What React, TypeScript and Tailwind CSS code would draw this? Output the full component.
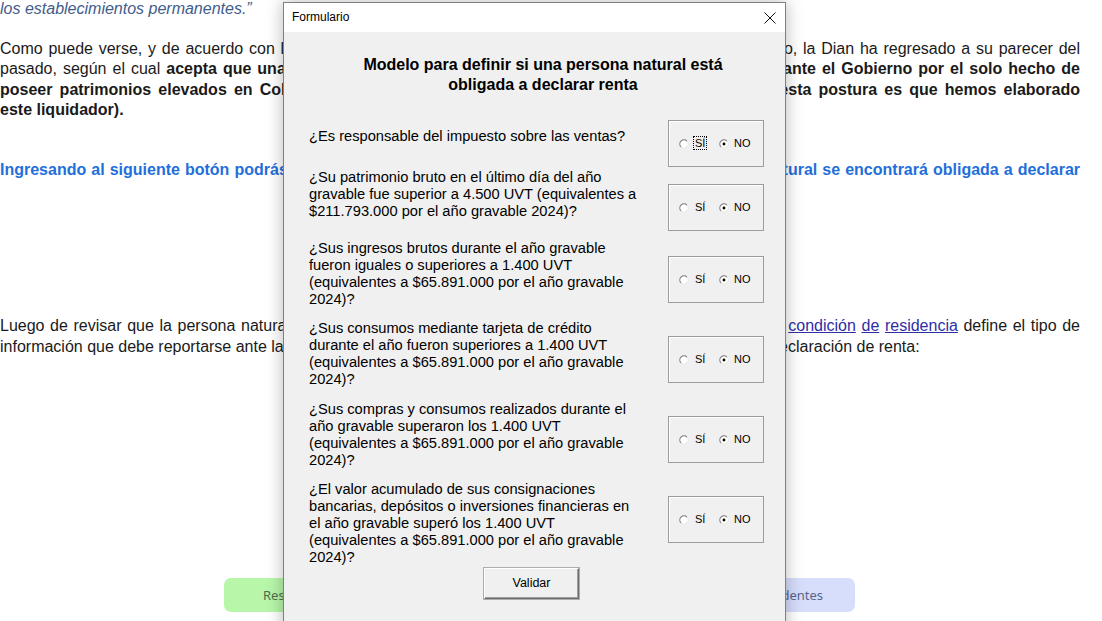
import React from "react";

function JL({ children }: { children: React.ReactNode }) {
  return <span className="block text-justify [text-align-last:justify]">{children}</span>;
}

function Radio({ on }: { on?: boolean }) {
  return (
    <svg width="10" height="10" viewBox="0 0 12 12" className="shrink-0">
      <circle cx="6" cy="6" r="5" fill="#ffffff" />
      <path d="M9.54 2.46 A5 5 0 0 0 2.46 9.54" stroke="#7c7c7c" strokeWidth="1.3" fill="none" />
      <path d="M2.46 9.54 A5 5 0 0 0 9.54 2.46" stroke="#e6e6e6" strokeWidth="1.3" fill="none" />
      {on && <circle cx="6" cy="6" r="1.7" fill="#000000" />}
    </svg>
  );
}

function Box({ focus, mt }: { focus?: boolean; mt: string }) {
  return (
    <div className={`${mt} flex h-[47px] w-[96px] shrink-0 items-center border border-[#9c9c9c] pl-[10px] shadow-[inset_1px_1px_0_#ffffff] font-['Liberation_Sans',Arial,sans-serif] text-[11px] text-black`}>
      <Radio />
      <span className="ml-[4px] w-[26px]">
        <span className={focus ? "border border-dotted border-black px-[1px]" : "px-[2px]"}>SÍ</span>
      </span>
      <Radio on />
      <span className="ml-[5px]">NO</span>
    </div>
  );
}

const rows = [
  { rowMt: "mt-[25px]", textMt: "mt-[8px]", boxMt: "mt-0", focus: true, lines: ["¿Es responsable del impuesto sobre las ventas?"] },
  { rowMt: "mt-[2px]", textMt: "mt-0", boxMt: "mt-[15px]", lines: ["¿Su patrimonio bruto en el último día del año", "gravable fue superior a 4.500 UVT (equivalentes a", "$211.793.000 por el año gravable 2024)?"] },
  { rowMt: "mt-[9px]", textMt: "mt-0", boxMt: "mt-[16px]", lines: ["¿Sus ingresos brutos durante el año gravable", "fueron iguales o superiores a 1.400 UVT", "(equivalentes a $65.891.000 por el año gravable", "2024)?"] },
  { rowMt: "mt-[12px]", textMt: "mt-0", boxMt: "mt-[16px]", lines: ["¿Sus consumos mediante tarjeta de crédito", "durante el año fueron superiores a 1.400 UVT", "(equivalentes a $65.891.000 por el año gravable", "2024)?"] },
  { rowMt: "mt-[13px]", textMt: "mt-0", boxMt: "mt-[15px]", lines: ["¿Sus compras y consumos realizados durante el", "año gravable superaron los 1.400 UVT", "(equivalentes a $65.891.000 por el año gravable", "2024)?"] },
  { rowMt: "mt-[12px]", textMt: "mt-0", boxMt: "mt-[15px]", lines: ["¿El valor acumulado de sus consignaciones", "bancarias, depósitos o inversiones financieras en", "el año gravable superó los 1.400 UVT", "(equivalentes a $65.891.000 por el año gravable", "2024)?"] },
];

export default function App() {
  return (
    <div className="relative h-[621px] w-[1102px] overflow-hidden bg-white font-['Liberation_Sans',Arial,sans-serif] text-[16px] leading-[20.6px] text-[#1a1a1a]">
      <div className="w-[1080px]">
        <p className="-mt-[1px] italic text-[#3f5d8c]">los establecimientos permanentes.”</p>
        <p className="mt-[19px]">
          <JL>Como puede verse, y de acuerdo con lo expuesto en el Concepto de Renta de Personas Naturales unificado, la Dian ha regresado a su parecer del</JL>
          <JL>
            pasado, según el cual <b>acepta que una persona natural no residente sí debe presentar su declaración ante el Gobierno por el solo hecho de</b>
          </JL>
          <JL>
            <b>poseer patrimonios elevados en Colombia a 31 de diciembre de 2024 (precisamente para atender esta postura es que hemos elaborado</b>
          </JL>
          <span className="block">
            <b>este liquidador).</b>
          </span>
        </p>
        <p className="mt-[39px] font-bold text-[#1f6fdb]">
          <JL>Ingresando al siguiente botón podrás hoy conocer, de acuerdo con tus respuestas, si una persona natural se encontrará obligada a declarar</JL>
          <span className="block text-center">renta en Colombia:</span>
        </p>
        <p className="mt-[115px]">
          <JL>
            Luego de revisar que la persona natural no es residente fiscal en Colombia, debe tenerse en cuenta que su{" "}
            <a className="text-[#2e2ea6] underline">condición</a> <a className="text-[#2e2ea6] underline">de</a>{" "}
            <a className="text-[#2e2ea6] underline">residencia</a> define el tipo de
          </JL>
          <span className="block">información que debe reportarse ante la Dian y el tipo de formulario que se deberá utilizar para presentar su declaración de renta:</span>
        </p>
      </div>

      <div className="mt-[221px] flex gap-[31px] pl-[224px] font-['Noto_Sans',sans-serif] text-[13px]">
        <div className="flex h-[34px] w-[300px] items-center rounded-[7px] bg-[#b8f7aa] pl-[39px] text-[#4f6e4c]">Residentes</div>
        <div className="flex h-[34px] w-[300px] items-center justify-end rounded-[7px] bg-[#d7defc] pr-[32px] text-[#55658c]">No residentes</div>
      </div>

      <div className="absolute left-[283px] top-[2px] h-[640px] w-[503px] border border-[#808080] bg-[#f0f0f0] shadow-[0_0_16px_rgba(0,0,0,0.28)]">
        <div className="flex h-[29px] items-center justify-between bg-white pl-[8px] pr-[9px] text-[12px] text-black">
          <span>Formulario</span>
          <svg width="12" height="12" viewBox="0 0 12 12">
            <path d="M0.5 0.5 L11.5 11.5 M11.5 0.5 L0.5 11.5" stroke="#111111" strokeWidth="1" />
          </svg>
        </div>
        <div className="pl-[25px] text-black">
          <div className="mt-[23px] w-[468px] text-center text-[16px] font-bold leading-[20px]">
            Modelo para definir si una persona natural está
            <br />
            obligada a declarar renta
          </div>
          {rows.map((r, i) => (
            <div key={i} className={`${r.rowMt} flex items-start`}>
              <div className={`${r.textMt} w-[359px] text-[14.67px] leading-[17px]`}>
                {r.lines.map((l, j) => (
                  <span key={j} className="block whitespace-nowrap">{l}</span>
                ))}
              </div>
              <Box focus={r.focus} mt={r.boxMt} />
            </div>
          ))}
          <button className="ml-[175px] mt-[2px] flex h-[31px] w-[95px] items-center justify-center border border-t-white border-l-white border-b-[#6d6d6d] border-r-[#6d6d6d] bg-[#f0f0f0] text-[12.5px] text-black shadow-[inset_-1px_-1px_0_#a0a0a0,0_0_0_1px_#adadad]">
            Validar
          </button>
        </div>
      </div>
    </div>
  );
}
